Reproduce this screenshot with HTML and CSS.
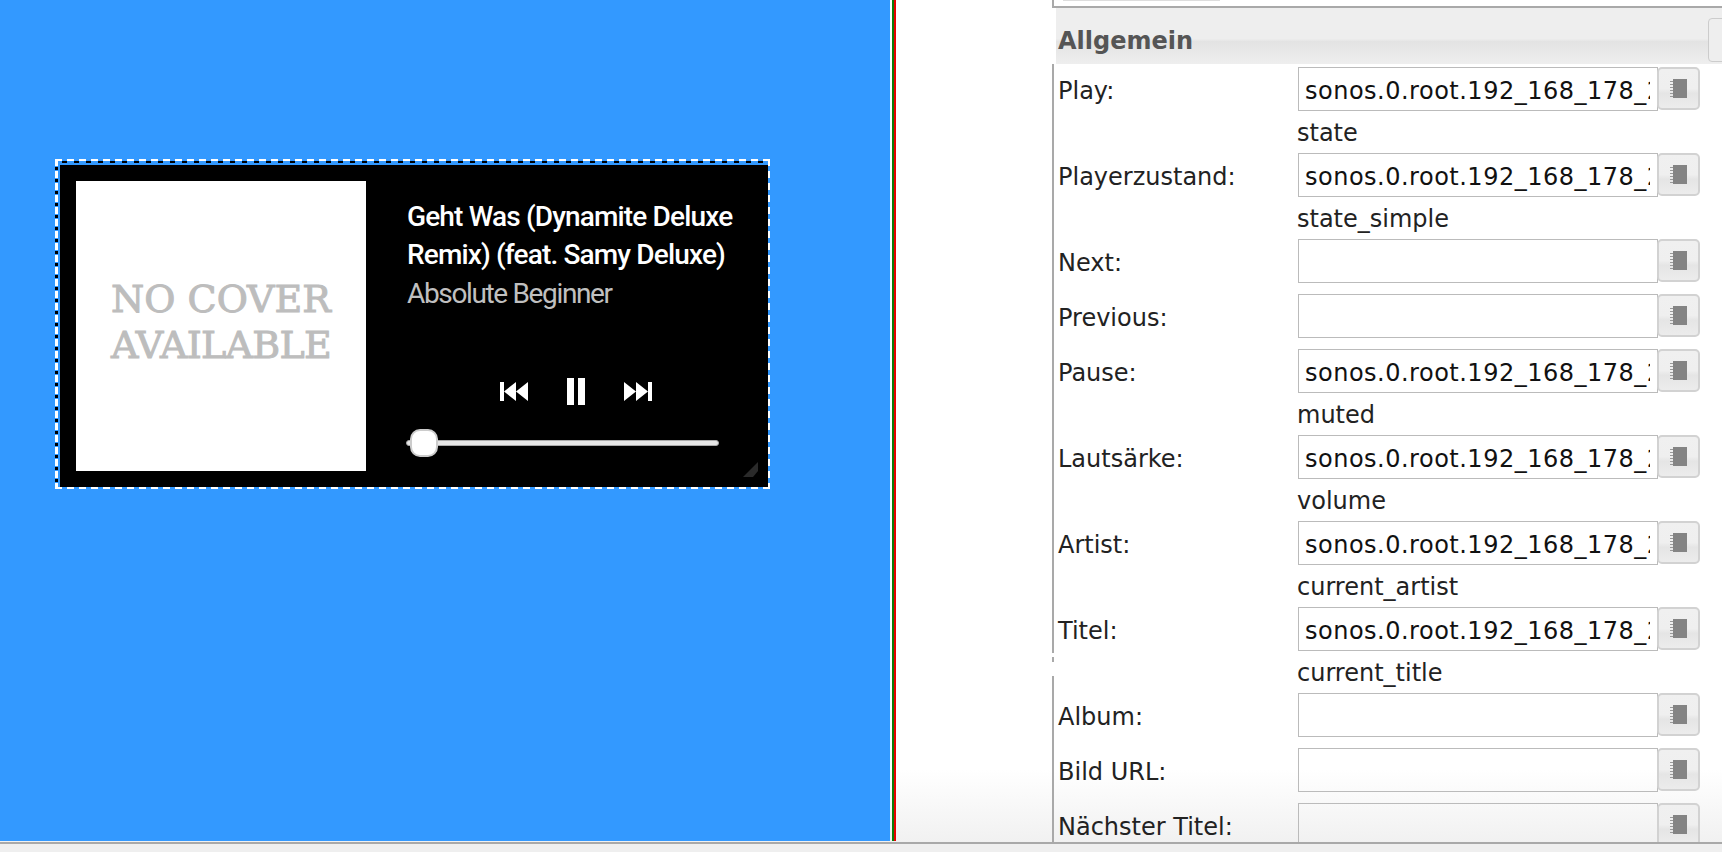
FILE: index.html
```html
<!DOCTYPE html>
<html lang="en">
<head>
  <meta charset="UTF-8">
  <title>Sonos Widget Editor</title>
  <link rel="stylesheet" href="styles.css">
</head>
<body>
  <div class="workspace">
    <div class="stage">
      <div class="widget-outline">
        <div class="widget">
          <div class="cover">
            <span>NO COVER<br><span class="cover-tight">AVAILABLE</span></span>
          </div>
          <div class="player">
            <div class="title">Geht Was (Dynamite Deluxe Remix) (feat. Samy Deluxe)</div>
            <div class="artist">Absolute Beginner</div>
            <div class="controls">
              <svg class="ctrl-icon" width="28" height="19" viewBox="0 0 28 19">
                <path d="M0 0h4v19H0zM4 9.5L16 0v19zM16 9.5L28 0v19z" fill="#fff"/>
              </svg>
              <svg class="ctrl-icon" width="18" height="27" viewBox="0 0 18 27">
                <path d="M0 0h7v27H0zM11 0h7v27h-7z" fill="#fff"/>
              </svg>
              <svg class="ctrl-icon" width="28" height="19" viewBox="0 0 28 19">
                <path d="M0 0l12 9.5L0 19zM12 0l12 9.5L12 19zM24 0h4v19h-4z" fill="#fff"/>
              </svg>
            </div>
            <div class="slider">
              <div class="slider-thumb"></div>
            </div>
          </div>
          <svg class="resize-grip" width="15" height="15" viewBox="0 0 15 15">
            <path d="M15 0L0 15h10l5-6z" fill="#2a2a2a"/>
          </svg>
        </div>
      </div>
    </div>
    <div class="divider"></div>
    <div class="gap"></div>
    <div class="panel">
      <div class="notch notch-a"></div>
      <div class="notch notch-b"></div>
      <div class="panel-top"></div>
      <div class="panel-head">
        <h2>Allgemein</h2>
        <button class="head-btn"></button>
      </div>
      <div class="fields">
        <label>Play:</label>
        <input type="text" value="sonos.0.root.192_168_178_27.state">
        <button class="pick"><svg width="17" height="19" viewBox="0 0 17 19"><path class="pick-dots" d="M0 2h4v1H0zM0 5h4v1H0zM0 8h4v1H0zM0 11h4v1H0zM0 14h4v1H0zM0 17h4v1H0z"/><path class="pick-body" d="M3 0h14v19H3z"/></svg></button>
        <div class="sub">state</div>

        <label>Playerzustand:</label>
        <input type="text" value="sonos.0.root.192_168_178_27.state_simple">
        <button class="pick"><svg width="17" height="19" viewBox="0 0 17 19"><path class="pick-dots" d="M0 2h4v1H0zM0 5h4v1H0zM0 8h4v1H0zM0 11h4v1H0zM0 14h4v1H0zM0 17h4v1H0z"/><path class="pick-body" d="M3 0h14v19H3z"/></svg></button>
        <div class="sub">state_simple</div>

        <label>Next:</label>
        <input type="text">
        <button class="pick"><svg width="17" height="19" viewBox="0 0 17 19"><path class="pick-dots" d="M0 2h4v1H0zM0 5h4v1H0zM0 8h4v1H0zM0 11h4v1H0zM0 14h4v1H0zM0 17h4v1H0z"/><path class="pick-body" d="M3 0h14v19H3z"/></svg></button>
        <div class="spacer"></div>

        <label>Previous:</label>
        <input type="text">
        <button class="pick"><svg width="17" height="19" viewBox="0 0 17 19"><path class="pick-dots" d="M0 2h4v1H0zM0 5h4v1H0zM0 8h4v1H0zM0 11h4v1H0zM0 14h4v1H0zM0 17h4v1H0z"/><path class="pick-body" d="M3 0h14v19H3z"/></svg></button>
        <div class="spacer"></div>

        <label>Pause:</label>
        <input type="text" value="sonos.0.root.192_168_178_27.muted">
        <button class="pick"><svg width="17" height="19" viewBox="0 0 17 19"><path class="pick-dots" d="M0 2h4v1H0zM0 5h4v1H0zM0 8h4v1H0zM0 11h4v1H0zM0 14h4v1H0zM0 17h4v1H0z"/><path class="pick-body" d="M3 0h14v19H3z"/></svg></button>
        <div class="sub">muted</div>

        <label>Lautsärke:</label>
        <input type="text" value="sonos.0.root.192_168_178_27.volume">
        <button class="pick"><svg width="17" height="19" viewBox="0 0 17 19"><path class="pick-dots" d="M0 2h4v1H0zM0 5h4v1H0zM0 8h4v1H0zM0 11h4v1H0zM0 14h4v1H0zM0 17h4v1H0z"/><path class="pick-body" d="M3 0h14v19H3z"/></svg></button>
        <div class="sub">volume</div>

        <label>Artist:</label>
        <input type="text" value="sonos.0.root.192_168_178_27.current_artist">
        <button class="pick"><svg width="17" height="19" viewBox="0 0 17 19"><path class="pick-dots" d="M0 2h4v1H0zM0 5h4v1H0zM0 8h4v1H0zM0 11h4v1H0zM0 14h4v1H0zM0 17h4v1H0z"/><path class="pick-body" d="M3 0h14v19H3z"/></svg></button>
        <div class="sub">current_artist</div>

        <label>Titel:</label>
        <input type="text" value="sonos.0.root.192_168_178_27.current_title">
        <button class="pick"><svg width="17" height="19" viewBox="0 0 17 19"><path class="pick-dots" d="M0 2h4v1H0zM0 5h4v1H0zM0 8h4v1H0zM0 11h4v1H0zM0 14h4v1H0zM0 17h4v1H0z"/><path class="pick-body" d="M3 0h14v19H3z"/></svg></button>
        <div class="sub">current_title</div>

        <label>Album:</label>
        <input type="text">
        <button class="pick"><svg width="17" height="19" viewBox="0 0 17 19"><path class="pick-dots" d="M0 2h4v1H0zM0 5h4v1H0zM0 8h4v1H0zM0 11h4v1H0zM0 14h4v1H0zM0 17h4v1H0z"/><path class="pick-body" d="M3 0h14v19H3z"/></svg></button>
        <div class="spacer"></div>

        <label>Bild URL:</label>
        <input type="text">
        <button class="pick"><svg width="17" height="19" viewBox="0 0 17 19"><path class="pick-dots" d="M0 2h4v1H0zM0 5h4v1H0zM0 8h4v1H0zM0 11h4v1H0zM0 14h4v1H0zM0 17h4v1H0z"/><path class="pick-body" d="M3 0h14v19H3z"/></svg></button>
        <div class="spacer"></div>

        <label>Nächster Titel:</label>
        <input type="text">
        <button class="pick"><svg width="17" height="19" viewBox="0 0 17 19"><path class="pick-dots" d="M0 2h4v1H0zM0 5h4v1H0zM0 8h4v1H0zM0 11h4v1H0zM0 14h4v1H0zM0 17h4v1H0z"/><path class="pick-body" d="M3 0h14v19H3z"/></svg></button>
      </div>
    </div>
  </div>
  <div class="statusbar"></div>
</body>
</html>
```

FILE: styles.css
```css
html, body {
    margin: 0;
    padding: 0;
    height: 100%;
    overflow: hidden;
}

body {
    display: flex;
    flex-direction: column;
    background-color: #fff;
    font-family: "DejaVu Sans", Verdana, sans-serif;
    color: #222;
}

.workspace {
    display: flex;
    height: 842px;
    overflow: hidden;
    background: linear-gradient(to bottom, #fff 0, #fff 770px, #f1f1f1 842px);
}

.statusbar {
    height: 8px;
    border-top: 2px solid #a9a9a9;
    background-color: #efefef;
}

/* left side, the editor canvas */
.stage {
    width: 890px;
    height: 841px;
    padding: 159px 0 0 55px;
    box-sizing: border-box;
    background-color: #3399ff;
}

/* selection frame: white dashes, black ones in the gaps on top and left */
.widget-outline {
    width: 715px;
    height: 330px;
    box-sizing: border-box;
    padding: 6px 0 0 5px;
    background-image:
        repeating-linear-gradient(to right, #fff 0 7px, transparent 7px 12px),
        repeating-linear-gradient(to right, transparent 0 7px, #000 7px 12px),
        repeating-linear-gradient(to bottom, #fff 0 7px, transparent 7px 8px, #000 8px 11px, transparent 11px 12px),
        repeating-linear-gradient(to right, #fff 0 7px, transparent 7px 12px),
        repeating-linear-gradient(to bottom, #fff 0 7px, transparent 7px 12px);
    background-size: 100% 2px, 100% 2px, 3px 100%, 100% 2px, 2px 100%;
    background-position: 0 0, 0 2px, 0 0, 0 100%, 100% 0;
    background-repeat: no-repeat;
}

.widget {
    position: relative;
    display: flex;
    width: 708px;
    height: 322px;
    box-sizing: border-box;
    padding: 16px;
    background-color: #000;
}

.cover {
    display: flex;
    align-items: center;
    justify-content: center;
    width: 290px;
    height: 290px;
    flex-shrink: 0;
    box-sizing: border-box;
    padding-bottom: 9px;
    background-color: #fff;
    color: #bdbdbd;
    font-family: "DejaVu Serif", serif;
    font-size: 38px;
    line-height: 46px;
    text-align: center;
    -webkit-text-stroke: 1px #bdbdbd;
}

.cover-tight {
    letter-spacing: -0.7px;
}

.player {
    width: 330px;
    margin-left: 42px;
}

.title {
    margin: 17px 0 0 -1px;
    color: #fff;
    font-family: Roboto, sans-serif;
    font-size: 28px;
    font-weight: 500;
    letter-spacing: -0.85px;
    line-height: 38px;
}

.artist {
    margin: 3px 0 0 -1px;
    color: #c0c0c0;
    font-family: Roboto, sans-serif;
    font-size: 28px;
    letter-spacing: -1.35px;
    line-height: 34px;
}

.controls {
    display: flex;
    align-items: center;
    gap: 39px;
    margin: 67px 0 0 92px;
}

.ctrl-icon {
    display: block;
}

.slider {
    position: relative;
    width: 313px;
    height: 6px;
    box-sizing: border-box;
    margin: 35px 0 0 -2px;
    border: 1px solid #aaa;
    border-radius: 3px;
    background-color: #e6e6e6;
}

.slider-thumb {
    position: absolute;
    left: 3px;
    top: -12px;
    width: 24px;
    height: 24px;
    border: 2px solid #ccc;
    border-radius: 10px;
    background-color: #fff;
}

.resize-grip {
    position: absolute;
    right: 10px;
    bottom: 10px;
}

/* the two thin lines between canvas and panel */
.divider {
    width: 4px;
    margin-left: 2px;
    border-left: 2px solid #0a7d0a;
    border-right: 2px solid #e80000;
    box-sizing: border-box;
    height: 841px;
}

.gap {
    width: 156px;
}

/* right side, widget properties */
.panel {
    position: relative;
    flex: 1;
    border-left: 2px solid #a9a9a9;
    min-width: 0;
}

.notch {
    position: absolute;
    left: -2px;
    width: 2px;
    background-color: #fff;
}

.notch-a {
    top: 653px;
    height: 4px;
}

.notch-b {
    top: 662px;
    height: 14px;
}

.panel-top {
    margin-left: 9px;
    width: 157px;
    height: 1px;
    background-color: #ddd;
}

.panel-head {
    display: flex;
    justify-content: space-between;
    align-items: center;
    height: 56px;
    margin-top: 5px;
    border-top: 2px solid #a9a9a9;
    margin-left: -2px;
    padding-left: 4px;
    background-color: #fff;
}

.panel-head h2 {
    display: flex;
    align-items: flex-end;
    flex: 1;
    height: 56px;
    margin: 0;
    padding: 0 0 9px 2px;
    box-sizing: border-box;
    font-size: 24px;
    color: #555;
    background: linear-gradient(to bottom, #eee 0, #eee 55%, #e3e3e3 60%, #eee 100%);
}

.head-btn {
    position: absolute;
    right: -30px;
    top: 18px;
    width: 44px;
    height: 44px;
    border: 1px solid #ccc;
    border-radius: 4px;
    background-color: #eee;
}

.fields {
    display: grid;
    grid-template-columns: 242px 360px 42px;
    grid-auto-rows: auto;
    align-items: center;
    padding: 3px 0 0 2px;
}

.fields label {
    height: 44px;
    font-size: 24px;
    line-height: 48px;
    padding-left: 2px;
}

.fields input {
    width: 360px;
    height: 44px;
    box-sizing: border-box;
    border: 1px solid #bbb;
    padding: 3px 7px 0 6px;
    background: transparent;
    font-family: "DejaVu Sans", Verdana, sans-serif;
    font-size: 24px;
    letter-spacing: 0.5px;
    color: #111;
}

.pick {
    display: flex;
    align-items: center;
    justify-content: center;
    align-self: start;
    width: 43px;
    height: 43px;
    margin-left: -1px;
    padding: 0;
    border: 2px solid #d2d2d2;
    border-radius: 5px;
    background: linear-gradient(to bottom, #f0f0f0 0, #efefef 50%, #e5e5e5 62%, #ececec 100%);
}

.pick svg {
    filter: blur(0.4px);
}

.pick-dots {
    fill: #999;
}

.pick-body {
    fill: #848484;
}

.sub {
    grid-column: 2 / 4;
    height: 42px;
    margin-left: -1px;
    line-height: 45px;
    font-size: 24px;
}

.spacer {
    grid-column: 1 / 4;
    height: 11px;
}
```
